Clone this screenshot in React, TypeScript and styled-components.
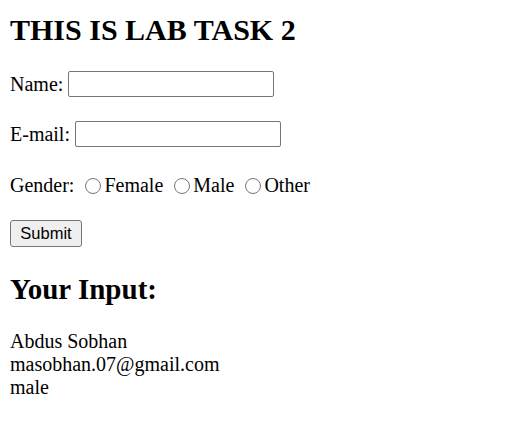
import React from "react";
import styled, { createGlobalStyle } from "styled-components";

const GlobalStyle = createGlobalStyle`
  html, body {
    margin: 0;
    padding: 0;
    background: #ffffff;
  }
  body {
    font-family: "Liberation Serif", "Times New Roman", serif;
    font-size: 20px;
    color: #000000;
  }
`;

const Page = styled.div`
  padding: 0 10px 10px;
`;

const Title = styled.h1`
  font-size: 30px;
  font-weight: bold;
  line-height: 35px;
  margin: 12px 0 24px;
`;

const Row = styled.div<{ gap?: number }>`
  height: 26px;
  line-height: 26px;
  margin-bottom: ${(p) => p.gap ?? 24}px;
  white-space: nowrap;
`;

const TextInput = styled.input`
  box-sizing: border-box;
  width: 206px;
  height: 26px;
  margin: 0 0 0 5px;
  padding: 1px 2px;
  border: 1px solid #767676;
  border-radius: 2px;
  font-size: 16.5px;
  font-family: "Liberation Sans", Arial, sans-serif;
  vertical-align: middle;
  position: relative;
  top: -2px;
  background: #ffffff;
`;

const Radio = styled.input`
  width: 16px;
  height: 16px;
  margin: 0 3px 0 6px;
  vertical-align: -2px;
  accent-color: #767676;
`;

const SubmitButton = styled.button`
  box-sizing: border-box;
  display: block;
  width: 72px;
  height: 27px;
  padding: 0;
  margin: 0 0 25px;
  font-family: "Liberation Sans", Arial, sans-serif;
  font-size: 16.5px;
  color: #000000;
  background: #efefef;
  border: 1px solid #767676;
  border-radius: 3px;
`;

const SubTitle = styled.h2`
  font-size: 29px;
  font-weight: bold;
  line-height: 35px;
  margin: 0 0 23px;
`;

const Output = styled.div`
  line-height: 23px;
`;

export default () => {
  return (
    <Page>
      <GlobalStyle />
      <Title>THIS IS LAB TASK 2</Title>
      <Row>
        Name:
        <TextInput type="text" name="name" />
      </Row>
      <Row gap={25}>
        E-mail:
        <TextInput type="text" name="email" />
      </Row>
      <Row gap={22}>
        Gender:&nbsp;
        <Radio type="radio" name="gender" value="female" />
        Female&nbsp;
        <Radio type="radio" name="gender" value="male" />
        Male&nbsp;
        <Radio type="radio" name="gender" value="other" />
        Other
      </Row>
      <SubmitButton type="submit">Submit</SubmitButton>
      <SubTitle>Your Input:</SubTitle>
      <Output>
        <div>Abdus Sobhan</div>
        <div>masobhan.07@gmail.com</div>
        <div>male</div>
      </Output>
    </Page>
  );
};
